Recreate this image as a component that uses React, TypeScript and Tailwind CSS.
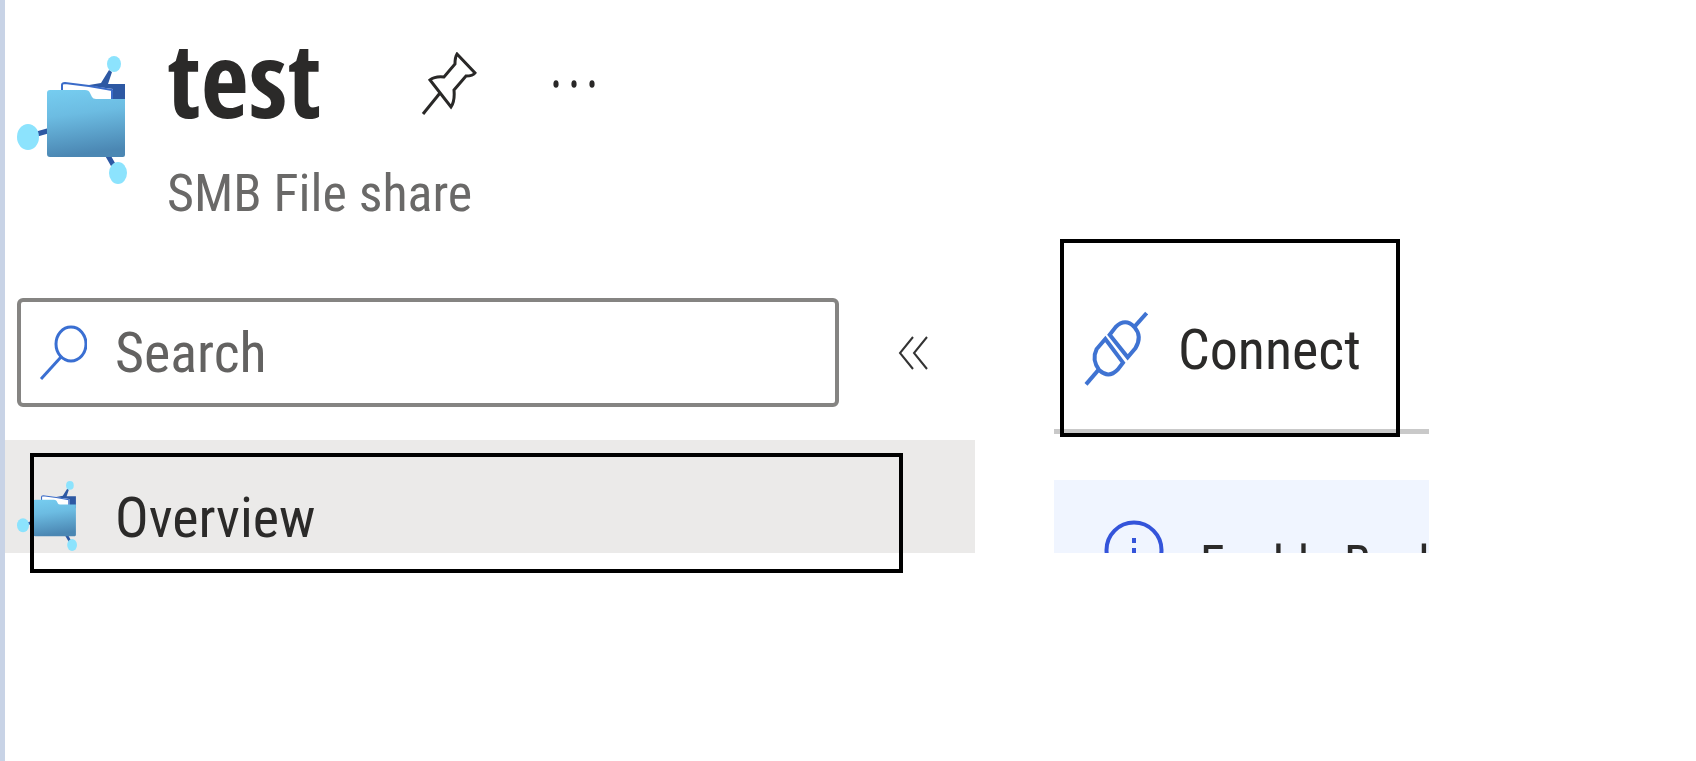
import { useId } from "react";

function FileShareIcon({ className }: { className: string }) {
  const id = useId();
  return (
    <svg viewBox="0 0 110 128" className={className} aria-hidden="true">
      <defs>
        <linearGradient id={id} x1="0" y1="0" x2="0.15" y2="1">
          <stop offset="0" stopColor="#76cdf0" />
          <stop offset="0.4" stopColor="#6cbce2" />
          <stop offset="1" stopColor="#4b87b3" />
        </linearGradient>
      </defs>
      <path d="M92 14 L95 16 L91 28 H108 V50 H60 L72 29 L84 27 Z" fill="#2d58a3" />
      <path d="M20 78 L34 74 M90 98 L98 112" stroke="#2d58a3" strokeWidth="5" />
      <path d="M45 40 V28 L52 27 L96 33 V50 H45 Z" fill="#fff" />
      <path d="M45 36 V29 Q45 27 48 27 L72 30 L95 34 V44" fill="none" stroke="#3a6bc8" strokeWidth="2" />
      <path
        d="M33 34 H68 Q72 34 73 37 L75 41 Q76 43 79 43 H108 V99 Q108 101 106 101 H33 Q30 101 30 98 V37 Q30 34 33 34 Z"
        fill={`url(#${id})`}
      />
      <ellipse cx="97" cy="8" rx="7" ry="8" fill="#8ce3fd" />
      <ellipse cx="11" cy="81" rx="11" ry="13" fill="#8ce3fd" />
      <ellipse cx="101" cy="117" rx="9" ry="11" fill="#8ce3fd" />
    </svg>
  );
}

function PinIcon() {
  return (
    <svg viewBox="0 0 56 64" className="h-16 w-14" fill="none" stroke="#292827" strokeWidth="3" aria-hidden="true">
      <path d="M36 2 L54 21 Q52 24 45 24 L33 38 Q34 49 30 55 L9 28 Q14 24 23 25 L34 12 Q34 5 36 2 Z" />
      <path d="M19 41 L2 62" />
    </svg>
  );
}

function MoreIcon() {
  return (
    <svg viewBox="0 0 42 10" className="h-[10px] w-[42px]" fill="#292827" aria-hidden="true">
      <ellipse cx="3" cy="5" rx="2.6" ry="3.8" />
      <ellipse cx="21" cy="5" rx="2.6" ry="3.8" />
      <ellipse cx="39" cy="5" rx="2.6" ry="3.8" />
    </svg>
  );
}

function SearchIcon() {
  return (
    <svg viewBox="0 0 48 56" className="h-14 w-12 shrink-0" fill="none" stroke="#3a6fd2" strokeWidth="3" aria-hidden="true">
      <ellipse cx="32" cy="19" rx="15" ry="17" />
      <path d="M22 32 L2 54" />
    </svg>
  );
}

function CollapseIcon() {
  return (
    <svg viewBox="0 0 32 36" className="h-9 w-8" fill="none" stroke="#333" strokeWidth="2" aria-hidden="true">
      <path d="M15 2 L2 18 L15 34 M29 2 L16 18 L29 34" />
    </svg>
  );
}

function PlugIcon() {
  return (
    <svg viewBox="0 0 192 225" className="h-[75px] w-16 shrink-0" fill="none" stroke="#3f73d2" strokeWidth="12" aria-hidden="true">
      <path d="M6 220 L44 176" />
      <path d="M64 84 L117 155 L101 176 Q74 204 46 178 Q22 146 38 114 Z" />
      <path d="M77 71 L131 139 L154 112 Q176 76 151 48 Q124 20 95 48 Z" />
      <path d="M149 50 L188 6" />
    </svg>
  );
}

function InfoIcon() {
  return (
    <svg viewBox="0 0 60 60" className="h-[60px] w-[60px] shrink-0" fill="none" stroke="#3454da" strokeWidth="4" aria-hidden="true">
      <circle cx="30" cy="30" r="27.5" />
      <path d="M30 18 V23 M30 28 V46" />
    </svg>
  );
}

export default function App() {
  return (
    <div className="grid min-h-screen grid-cols-[970fr_79fr_375fr_267fr] items-start border-l-[5px] border-[#c8d3e6] bg-white font-['Roboto_Condensed',Roboto,sans-serif] text-[#2b2a29]">
      <div className="min-w-0 pt-[22px]">
        <header className="flex items-start gap-10 pl-3">
          <FileShareIcon className="mt-[34px] h-32 w-[110px] shrink-0" />
          <div>
            <div className="flex items-center">
              <h1 className="font-['Open_Sans_Condensed','Open_Sans',sans-serif] text-[104px] leading-[112px] font-bold">test</h1>
              <div className="flex items-center gap-[76px] pt-3 pl-[100px]">
                <button type="button" aria-label="Pin">
                  <PinIcon />
                </button>
                <button type="button" aria-label="More actions">
                  <MoreIcon />
                </button>
              </div>
            </div>
            <p className="mt-7 text-[52px] leading-16 text-[#6a6968]">SMB File share</p>
          </div>
        </header>

        <div className="mt-[72px] flex items-center pr-[45px] pl-3">
          <label className="flex h-[109px] min-w-0 flex-1 items-center gap-7 rounded-md border-4 border-[#858482] pl-[18px]">
            <SearchIcon />
            <input
              type="search"
              aria-label="Search"
              placeholder="Search"
              className="min-w-0 flex-1 text-[56px] leading-16 outline-none placeholder:text-[#636261] placeholder:opacity-100"
            />
          </label>
          <button type="button" aria-label="Collapse menu" className="ml-[59px]">
            <CollapseIcon />
          </button>
        </div>

        <nav className="relative mt-[33px]">
          <a href="#overview" className="flex h-[113px] items-center gap-[38px] bg-[#ebeae9] pt-[38px] pl-3">
            <FileShareIcon className="h-[70px] w-[60px] shrink-0" />
            <span className="pt-1 text-[56px] leading-16">Overview</span>
          </a>
          <span className="pointer-events-none absolute top-[13px] right-[72px] -bottom-5 left-[25px] border-4 border-black" />
        </nav>
      </div>

      <main className="col-start-3 min-w-0 pt-[239px]">
        <div className="flex h-[195px] border-b-[5px] border-[#c9c9c9] pr-[29px] pl-1.5">
          <button type="button" className="flex h-[198px] flex-1 items-center gap-[30px] border-4 border-black pt-5 pl-5 text-[56px] leading-[72px]">
            <PlugIcon />
            <span className="pt-1">Connect</span>
          </button>
        </div>
        <div className="mt-[46px] flex h-[73px] items-start gap-9 overflow-hidden bg-[#f0f5ff] pt-10 pl-[50px]">
          <InfoIcon />
          <span className="pt-3 text-[50px] leading-16 whitespace-nowrap">Enable Back</span>
        </div>
      </main>
    </div>
  );
}
